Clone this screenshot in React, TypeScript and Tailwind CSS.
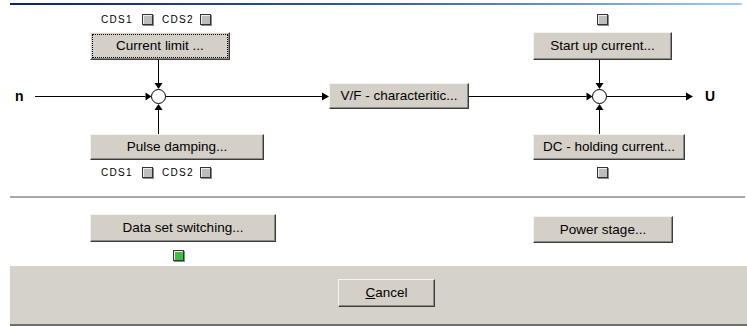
import React from 'react';

const FONT = "font-['Liberation_Sans',Arial,sans-serif]";

function WinButton({
  children,
  className = '',
  focused = false,
}: {
  children: React.ReactNode;
  className?: string;
  focused?: boolean;
}) {
  return (
    <button
      type="button"
      className={`flex items-center justify-center bg-[#d4d0c8] border border-t-[#f4f3f0] border-l-[#f4f3f0] border-r-[#3c3c3c] border-b-[#3c3c3c] shadow-[inset_-1px_-1px_0_#8a8a8a] text-[13.5px] leading-none text-black ${
        focused ? 'outline-1 outline-dotted outline-black outline-offset-[-3px]' : ''
      } ${className}`}
    >
      {children}
    </button>
  );
}

function Check({ on = false }: { on?: boolean }) {
  return (
    <span
      className={`block w-[11px] h-[11px] border border-[#333333] shadow-[inset_1px_1px_0_#eeeeee,1px_1px_0_#8a8a8a] ${
        on ? 'bg-[#3fbf3f]' : 'bg-[#bdbdbd]'
      }`}
    />
  );
}

function CdsRow() {
  return (
    <div className="h-[11px] pl-[11px] flex items-center text-[10px] tracking-[1.3px] text-black">
      <span>CDS1</span>
      <span className="ml-[9px]">
        <Check />
      </span>
      <span className="ml-[9px]">CDS2</span>
      <span className="ml-[6px]">
        <Check />
      </span>
    </div>
  );
}

// summing junction: vertical inputs from top and bottom, main line left to right
function Junction({ width, cx }: { width: number; cx: number }) {
  const cy = 36;
  const r = 7;
  const x = cx + 0.5;
  return (
    <svg width={width} height={74} className="block">
      <line x1={x} y1={0} x2={x} y2={cy - r - 6} stroke="black" />
      <polygon points={`${x - 4},${cy - r - 6} ${x + 4},${cy - r - 6} ${x},${cy - r}`} fill="black" />
      <line x1={x} y1={74} x2={x} y2={cy + r + 6} stroke="black" />
      <polygon points={`${x - 4},${cy + r + 7} ${x + 4},${cy + r + 7} ${x},${cy + r + 1}`} fill="black" />
      <line x1={0} y1={cy + 0.5} x2={x - r - 6} y2={cy + 0.5} stroke="black" />
      <polygon points={`${x - r - 6},${cy - 3.5} ${x - r - 6},${cy + 4.5} ${x - r},${cy + 0.5}`} fill="black" />
      <line x1={x + r} y1={cy + 0.5} x2={width} y2={cy + 0.5} stroke="black" />
      <circle cx={x} cy={cy + 0.5} r={r} fill="white" stroke="black" />
    </svg>
  );
}

function Wire({ width, arrow = false }: { width: number; arrow?: boolean }) {
  return (
    <div className="flex items-center">
      <svg width={width} height={10} className="block">
        <line x1={0} y1={5.5} x2={arrow ? width - 5 : width} y2={5.5} stroke="black" />
        {arrow && <polygon points={`${width - 7},1.5 ${width - 7},9.5 ${width},5.5`} fill="black" />}
      </svg>
    </div>
  );
}

export default function App() {
  return (
    <div className={`w-[747px] h-[326px] bg-white flex flex-col pl-[10px] pt-[3px] overflow-hidden ${FONT}`}>
      {/* title bar edge */}
      <div className="h-[2px] mr-[5px] bg-gradient-to-r from-[#0a246a] via-[#3a5a9a] to-[#a6caf0]" />

      {/* block diagram */}
      <div className="h-[191px] pt-[9px]">
        <div className="h-[164px] flex">
          <div className="w-[25px] pl-[5px] flex items-center text-[14px] font-bold">n</div>
          <Wire width={55} />

          <div className="w-[174px] flex flex-col">
            <CdsRow />
            <WinButton focused className="mt-[7px] h-[28px] w-[140px]">
              Current limit ...
            </WinButton>
            <Junction width={174} cx={68} />
            <WinButton className="h-[26px] w-[174px]">Pulse damping...</WinButton>
            <div className="mt-[7px]">
              <CdsRow />
            </div>
          </div>

          <Wire width={65} arrow />
          <div className="flex items-center">
            <WinButton className="h-[26px] w-[140px]">V/F - characteritic...</WinButton>
          </div>
          <Wire width={64} />

          <div className="w-[152px] flex flex-col">
            <div className="h-[11px] pl-[64px] flex items-center">
              <Check />
            </div>
            <WinButton className="mt-[7px] h-[28px] w-[139px]">Start up current...</WinButton>
            <Junction width={152} cx={66} />
            <WinButton className="h-[26px] w-[152px]">DC - holding current...</WinButton>
            <div className="mt-[7px] h-[11px] pl-[64px] flex items-center">
              <Check />
            </div>
          </div>

          <Wire width={8} arrow />
          <div className="pl-[12px] flex items-center text-[14px] font-bold">U</div>
        </div>
      </div>

      <div className="h-[2px] mr-[2px] bg-[#a9a9a9]" />

      {/* lower buttons */}
      <div className="h-[68px] flex pl-[80px]">
        <div className="flex flex-col pt-[16px]">
          <WinButton className="h-[28px] w-[186px]">Data set switching...</WinButton>
          <div className="mt-[8px] pl-[83px]">
            <Check on />
          </div>
        </div>
        <div className="pl-[257px] pt-[18px]">
          <WinButton className="h-[27px] w-[140px]">Power stage...</WinButton>
        </div>
      </div>

      {/* dialog footer */}
      <div className="h-[58px] bg-[#d5d2cb] pl-[328px] pt-[13px]">
        <WinButton className="h-[28px] w-[97px]">
          <span className="underline">C</span>ancel
        </WinButton>
      </div>
      <div className="h-[2px] bg-[#6f6f6f]" />
    </div>
  );
}
